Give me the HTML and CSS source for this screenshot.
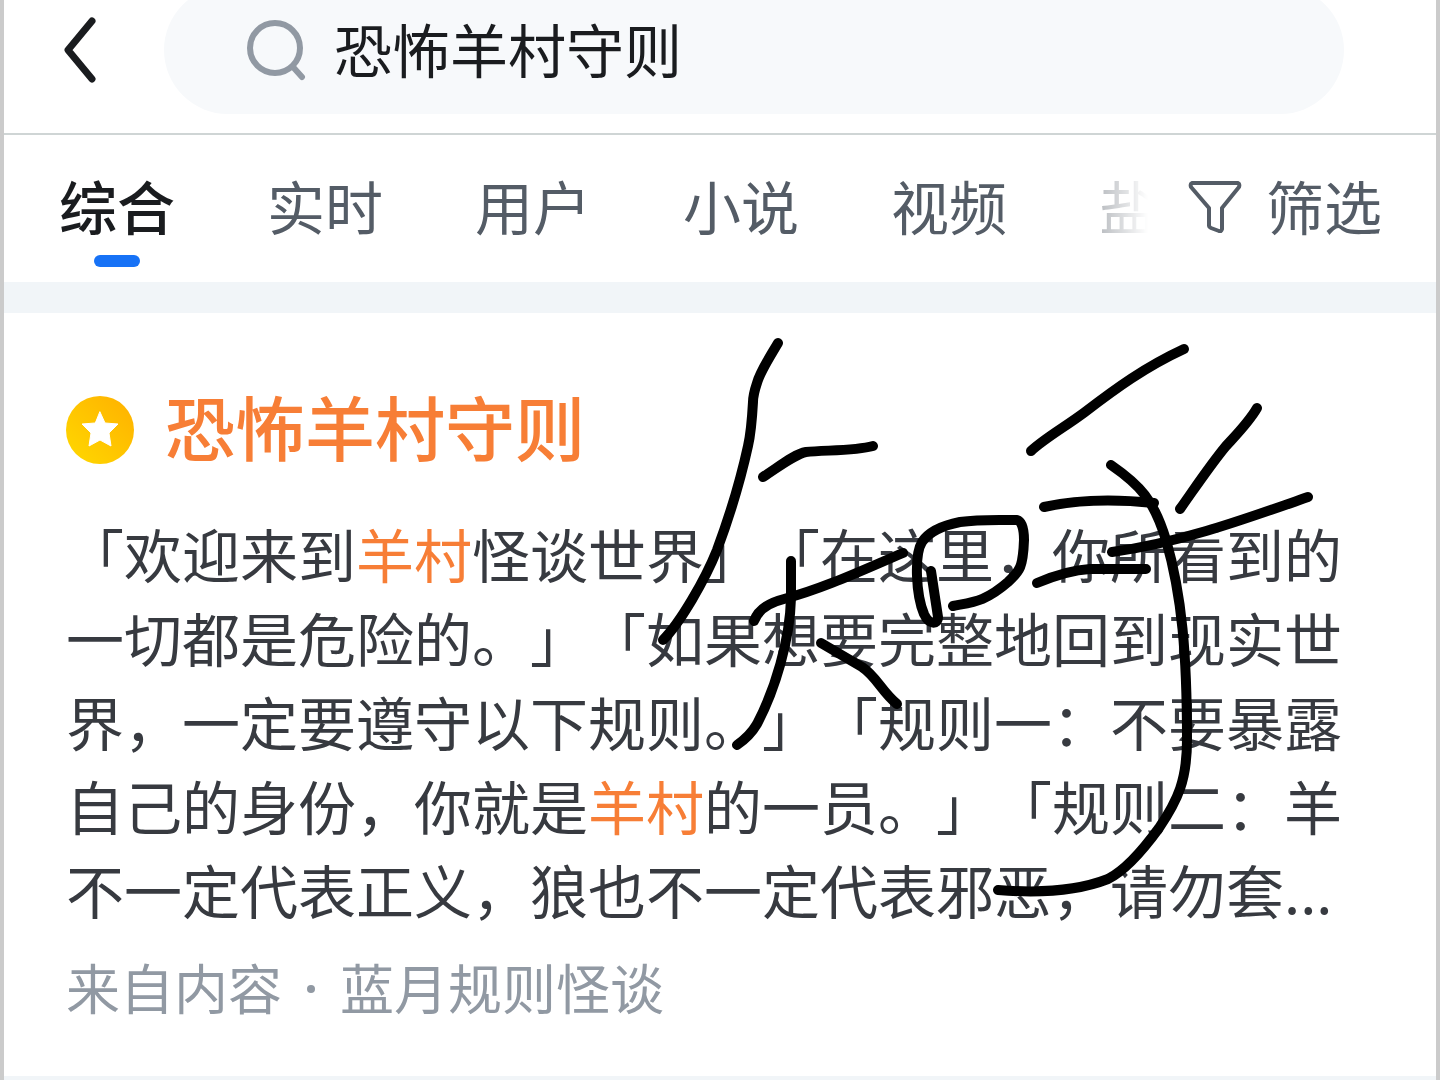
FILE: index.html
```html
<!DOCTYPE html>
<html lang="zh-CN">
<head>
  <meta charset="utf-8">
  <title>恐怖羊村守则</title>
  <link rel="stylesheet" href="styles.css">
</head>
<body>
  <div class="page">
    <header class="topbar">
      <button class="back" aria-label="返回">
        <svg width="36" height="68" viewBox="0 0 36 68"><path d="M32 5L8 34L32 63"/></svg>
      </button>
      <form class="search">
        <svg width="62" height="62" viewBox="0 0 62 62"><circle cx="29" cy="29" r="25"/><path d="M47 48L56 58"/></svg>
        <input type="text" class="query" value="恐怖羊村守则" aria-label="搜索">
      </form>
    </header>

    <nav class="tabs">
      <div class="tablist">
        <a href="#" class="tab active">综合</a>
        <a href="#" class="tab">实时</a>
        <a href="#" class="tab">用户</a>
        <a href="#" class="tab">小说</a>
        <a href="#" class="tab">视频</a>
        <a href="#" class="tab">盐选</a>
      </div>
      <button class="filter">
        <svg width="54" height="56" viewBox="0 0 54 56"><path d="M4 6H50Q52 7 51 10L34 31V52Q33 55 31 54L23 51Q21 50 21 49V31L3 10Q2 7 4 6Z"/></svg>
        筛选
      </button>
    </nav>

    <main class="result">
      <h2 class="title">
        <svg width="70" height="70" viewBox="0 0 70 70">
          <defs>
            <linearGradient id="gold" x1="1" y1="0" x2="0" y2="1">
              <stop offset="0" stop-color="#ffb000"/>
              <stop offset="1" stop-color="#ffd900"/>
            </linearGradient>
          </defs>
          <circle cx="34" cy="35" r="34" fill="url(#gold)"/>
          <path class="star" d="M34 17L39 28L52 29L43 38L45 51L34 45L23 51L25 38L16 29L29 28Z"/>
        </svg>
        <a href="#">恐怖羊村守则</a>
      </h2>
      <p class="excerpt">「欢迎来到<em>羊村</em>怪谈世界」「在这里，你所看到的一切都是危险的。」「如果想要完整地回到现实世界，一定要遵守以下规则。」「规则一：不要暴露自己的身份，你就是<em>羊村</em>的一员。」「规则二：羊不一定代表正义，狼也不一定代表邪恶，请勿套...</p>
      <div class="source"><span>来自内容</span><i class="dot"></i><span>蓝月规则怪谈</span></div>
    </main>

    <!-- pen strokes over the page -->
    <svg class="ink" width="1440" height="1080" viewBox="0 0 1440 1080">
      <path d="M778 343C768 360 760 372 757 383C754 392 753 396 753 402C752 420 751 433 748 446C741 478 730 515 717 550C705 580 680 623 663 640"/>
      <path d="M763 477C780 466 795 454 806 452C825 450 855 451 873 446"/>
      <path d="M754 621C758 610 768 603 784 599C825 588 865 569 903 553"/>
      <path d="M791 561V598C790 640 775 690 757 724Q750 736 737 745"/>
      <path d="M821 643L862 667C876 676 882 692 897 704"/>
      <path d="M931 571L938 617C938 625 929 625 924 614C916 595 914 555 922 542C930 530 945 525 960 522C980 519 1000 520 1017 520Q1024 522 1024 540C1023 567 1020 571 1008 582C985 602 973 602 953 606"/>
      <path d="M1031 451C1045 438 1065 427 1085 412C1115 389 1145 367 1184 349"/>
      <path d="M1257 408C1249 422 1237 434 1226 446C1211 464 1197 485 1180 509"/>
      <path d="M1044 507C1075 500 1115 499 1154 503"/>
      <path d="M1112 552C1180 543 1248 518 1308 497"/>
      <path d="M1037 583C1056 575 1072 570 1090 569H1146"/>
      <path d="M1111 465C1140 485 1154 500 1166 540C1182 595 1187 655 1187 740C1187 780 1178 800 1159 828C1135 861 1120 873 1108 879C1075 892 1035 893 998 890"/>
    </svg>
  </div>
</body>
</html>
```
FILE: styles.css
```css
* {
  box-sizing: border-box;
}
body {
  margin: 0;
  background-color: #FFFFFF;
  font-family: "Noto Sans CJK SC", sans-serif;
  font-size: 58px;
  line-height: 84px;
  text-spacing-trim: space-all;
}
svg {
  display: block;
  flex: none;
  fill: none;
  stroke-linecap: round;
  stroke-linejoin: round;
}
a {
  color: inherit;
  text-decoration: none;
}
button {
  border: none;
  background: none;
  padding: 0;
  font: inherit;
  color: inherit;
}
.page {
  position: relative;
  min-height: 100vh;
  overflow: hidden;
  border: solid #CBCBCB;
  border-width: 0 4px;
}
.topbar {
  display: flex;
  align-items: flex-start;
  height: 135px;
  padding: 0 92px 0 56px;
  border-bottom: 2px solid #CFD5D5;
}
.back {
  margin: 16px 68px 0 0;
  stroke: #1A1C1F;
  stroke-width: 7px;
}
.search {
  display: flex;
  flex: 1;
  align-items: center;
  gap: 26px;
  height: 128px;
  margin: -14px 0 0;
  padding: 0 64px 0 82px;
  border-radius: 64px;
  background-color: #F7F9FB;
  stroke: #9199A3;
  stroke-width: 6px;
}
.query {
  flex: 1;
  min-width: 0;
  height: 84px;
  padding: 0 0 4px;
  border: none;
  outline: none;
  background: none;
  color: #1A1C1F;
  font: inherit;
}
.tabs {
  display: flex;
  gap: 40px;
  height: 178px;
  padding: 28px 54px 0 55px;
  border-bottom: 31px solid #F1F5F8;
  color: #545C66;
}
.tablist {
  display: flex;
  flex: 1;
  gap: 92px;
  min-width: 0;
  overflow: hidden;
  white-space: nowrap;
  -webkit-mask-image: linear-gradient(to left, transparent, rgba(0,0,0,.4) 48px, #000 120px);
  mask-image: linear-gradient(to left, transparent, rgba(0,0,0,.4) 48px, #000 120px);
}
.tab {
  flex: none;
}
.active {
  color: #1A1C1F;
  font-weight: 500;
}
.active::after {
  content: "";
  display: block;
  width: 46px;
  height: 12px;
  margin: 8px auto 0;
  border-radius: 6px;
  background-color: #1772F6;
}
.filter {
  display: flex;
  align-items: center;
  gap: 24px;
  height: 84px;
  stroke: #545C66;
  stroke-width: 4px;
}
.result {
  padding: 71px 62px 47px;
  border-bottom: 4px solid #F1F5F8;
}
.title {
  display: flex;
  align-items: center;
  gap: 29px;
  margin: 0 0 43px;
  color: #F77E36;
  font-size: 70px;
  font-weight: 500;
}
.title svg {
  margin-top: 8px;
}
.star {
  fill: #FFFFFF;
  stroke: #FFFFFF;
}
.excerpt {
  margin: 0;
  color: #373A40;
}
.excerpt em {
  color: #F77E36;
  font-style: normal;
}
.source {
  display: flex;
  align-items: center;
  gap: 25px;
  margin-top: 14px;
  color: #9199A3;
  font-size: 54px;
}
.dot {
  width: 8px;
  height: 8px;
  margin-top: 4px;
  border-radius: 4px;
  background-color: #9199A3;
}
.ink {
  position: absolute;
  top: 0;
  left: -4px;
  stroke: #000000;
  stroke-width: 10px;
  pointer-events: none;
}
```
